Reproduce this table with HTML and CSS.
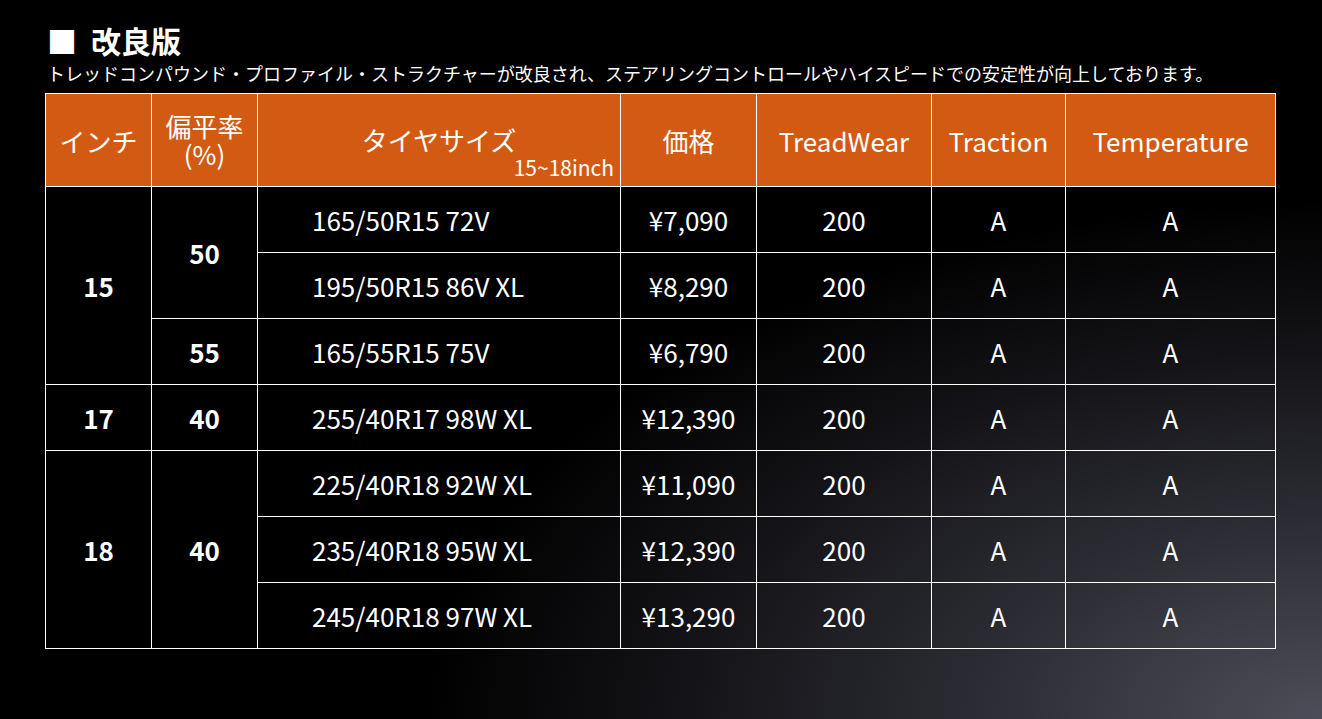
FILE: index.html
```html
<!DOCTYPE html>
<html lang="ja">
<head>
<meta charset="utf-8">
<title>改良版</title>
<link rel="stylesheet" href="styles.css">
</head>
<body>
<div class="page">
  <h1 class="title"><span class="mark">■</span>改良版</h1>
  <p class="lead">トレッドコンパウンド・プロファイル・ストラクチャーが改良され、ステアリングコントロールやハイスピードでの安定性が向上しております。</p>
  <table class="spec">
    <colgroup>
      <col class="c1"><col class="c2"><col class="c3"><col class="c4"><col class="c5"><col class="c6"><col class="c7">
    </colgroup>
    <thead>
      <tr class="head-row">
        <th>インチ</th>
        <th class="two">偏平率<br>(%)</th>
        <th class="size-head"><div class="main">タイヤサイズ</div><div class="sub">15~18inch</div></th>
        <th>価格</th>
        <th>TreadWear</th>
        <th>Traction</th>
        <th>Temperature</th>
      </tr>
    </thead>
    <tbody>
      <tr>
        <td class="b" rowspan="3">15</td>
        <td class="b" rowspan="2">50</td>
        <td class="size">165/50R15 72V</td>
        <td>¥7,090</td><td>200</td><td>A</td><td>A</td>
      </tr>
      <tr>
        <td class="size">195/50R15 86V XL</td>
        <td>¥8,290</td><td>200</td><td>A</td><td>A</td>
      </tr>
      <tr>
        <td class="b">55</td>
        <td class="size">165/55R15 75V</td>
        <td>¥6,790</td><td>200</td><td>A</td><td>A</td>
      </tr>
      <tr>
        <td class="b">17</td>
        <td class="b">40</td>
        <td class="size">255/40R17 98W XL</td>
        <td>¥12,390</td><td>200</td><td>A</td><td>A</td>
      </tr>
      <tr>
        <td class="b" rowspan="3">18</td>
        <td class="b" rowspan="3">40</td>
        <td class="size">225/40R18 92W XL</td>
        <td>¥11,090</td><td>200</td><td>A</td><td>A</td>
      </tr>
      <tr>
        <td class="size">235/40R18 95W XL</td>
        <td>¥12,390</td><td>200</td><td>A</td><td>A</td>
      </tr>
      <tr>
        <td class="size">245/40R18 97W XL</td>
        <td>¥13,290</td><td>200</td><td>A</td><td>A</td>
      </tr>
    </tbody>
  </table>
</div>
</body>
</html>
```

FILE: styles.css
```css
html, body {
  margin: 0;
  padding: 0;
  height: 100%;
}
body {
  background: #000;
  background-image: radial-gradient(ellipse 80% 85% at 100% 100%, #4c4d58 0%, #2e2f36 30%, #141418 60%, #000 85%);
  color: #fff;
  font-family: "Noto Sans CJK JP", "Noto Sans", sans-serif;
  overflow: hidden;
}
.page {
  padding: 22px 48px 0 45px;
}
.title {
  margin: 0 0 0 2px;
  font-size: 30px;
  font-weight: 700;
  line-height: 36px;
}
.mark {
  display: inline-block;
  margin-right: 14px;
}
.lead {
  margin: 3px 0 0 2px;
  font-size: 18px;
  line-height: 24px;
  white-space: nowrap;
}
.spec {
  margin-top: 8px;
  border-collapse: collapse;
  table-layout: fixed;
  width: 1230px;
}
.c1 { width: 106px; }
.c2 { width: 106px; }
.c3 { width: 363px; }
.c4 { width: 136px; }
.c5 { width: 175px; }
.c6 { width: 134px; }
.c7 { width: 210px; }
.spec th, .spec td {
  border: 1px solid #fff;
  text-align: center;
  padding: 0;
}
.head-row {
  height: 93px;
}
.spec th {
  background: #d25a13;
  font-weight: 400;
  font-size: 26px;
  line-height: 31px;
}
.spec th.two {
  line-height: 28px;
}
.spec th.size-head {
  vertical-align: top;
  padding: 30px 6px 0 0;
}
.size-head .main {
  padding-left: 6px;
}
.size-head .sub {
  text-align: right;
  font-size: 21px;
  line-height: 22px;
  margin-top: 1px;
}
.spec td {
  height: 65px;
  font-size: 26px;
  line-height: 30px;
}
.spec td.b {
  font-weight: 700;
}
.spec td.size {
  text-align: left;
  padding-left: 54px;
}
```
